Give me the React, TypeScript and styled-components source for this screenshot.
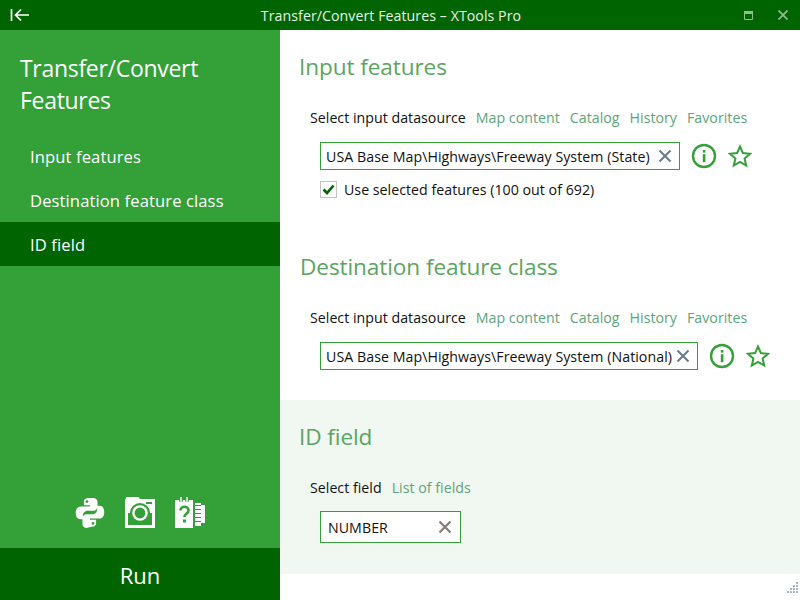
import React from 'react'
import styled, { createGlobalStyle } from 'styled-components'

const Global = createGlobalStyle`
  html, body { margin: 0; padding: 0; background: #fff; }
  body { font-family: "Open Sans", "Noto Sans", sans-serif; }
`

const DARK = '#006400'
const GREEN = '#33a137'

const Page = styled.div`
  width: 800px;
  height: 600px;
  display: flex;
  flex-direction: column;
  overflow: hidden;
  position: relative;
`
const TitleBar = styled.header`
  height: 30px;
  flex: none;
  background: ${DARK};
  display: flex;
  align-items: center;
  position: relative;
`
const BackButton = styled.div`
  width: 30px;
  padding-left: 10px;
  display: flex;
  align-items: center;
`
const TitleText = styled.div`
  position: absolute;
  left: 0;
  right: 18px;
  text-align: center;
  color: #e6f2e6;
  font-size: 14.2px;
  letter-spacing: 0.05px;
`
const WindowButtons = styled.div`
  margin-left: auto;
  display: flex;
  align-items: center;
  gap: 25px;
  padding-right: 12px;
`
const Body = styled.div`
  flex: 1;
  display: flex;
  min-height: 0;
`
const Sidebar = styled.aside`
  width: 280px;
  flex: none;
  background: ${GREEN};
  display: flex;
  flex-direction: column;
`
const SideTitle = styled.h1`
  margin: 0;
  padding: 22px 20px 0;
  font-size: 23px;
  line-height: 32px;
  font-weight: 400;
  color: #fff;
  letter-spacing: -0.3px;
`
const Nav = styled.nav`
  margin-top: 18px;
  display: flex;
  flex-direction: column;
`
const NavItem = styled.div<{ $active?: boolean }>`
  height: 44px;
  display: flex;
  align-items: center;
  padding-left: 30px;
  font-size: 16.6px;
  letter-spacing: 0.1px;
  color: #fff;
  background: ${p => (p.$active ? DARK : 'transparent')};
`
const Tools = styled.div`
  margin-top: auto;
  display: flex;
  justify-content: center;
  align-items: center;
  gap: 20px;
  padding-bottom: 20px;
`
const RunButton = styled.div`
  height: 52px;
  box-sizing: border-box;
  padding-top: 2px;
  flex: none;
  background: ${DARK};
  color: #fff;
  font-size: 22px;
  display: flex;
  align-items: center;
  justify-content: center;
`
const Main = styled.main`
  flex: 1;
  display: flex;
  flex-direction: column;
  background: #fff;
`
const Section = styled.section<{ $height: number; $tint?: boolean }>`
  height: ${p => p.$height}px;
  flex: none;
  box-sizing: border-box;
  padding: 22px 0 0 19px;
  background: ${p => (p.$tint ? '#f1f8f1' : 'transparent')};
`
const Heading = styled.h2<{ $shift?: number }>`
  margin: 0 0 0 ${p => p.$shift ?? 0}px;
  font-size: 22.6px;
  line-height: 30px;
  font-weight: 400;
  color: #5ba562;
  letter-spacing: -0.1px;
`
const SourceRow = styled.div`
  margin: 26px 0 0 11px;
  display: flex;
  gap: 10px;
  align-items: center;
  font-size: 14.2px;
  line-height: 20px;
  letter-spacing: 0.02px;
  white-space: nowrap;
`
const Label = styled.span`
  color: #111;
`
const Link = styled.span`
  color: #5ba57c;
`
const InputRow = styled.div<{ $top?: number }>`
  margin: ${p => p.$top ?? 14}px 0 0 21px;
  display: flex;
  align-items: center;
`
const InputBox = styled.div<{ $width: number; $tall?: boolean }>`
  width: ${p => p.$width}px;
  height: ${p => (p.$tall ? 32 : 28)}px;
  box-sizing: border-box;
  border: 1px solid ${GREEN};
  background: #fff;
  display: flex;
  align-items: center;
  padding: 0 ${p => (p.$tall ? 8 : 7)}px 0 ${p => (p.$tall ? 7 : 5)}px;
  font-size: 14.2px;
  letter-spacing: 0.05px;
  color: #111;
  white-space: nowrap;
`
const InputText = styled.span`
  flex: 1;
  overflow: hidden;
  margin-right: 3px;
`
const IconGroup = styled.div`
  margin-left: 11px;
  display: flex;
  align-items: center;
  gap: 11px;
`
const CheckRow = styled.label`
  margin: 10px 0 0 21px;
  display: flex;
  align-items: center;
  gap: 7px;
  font-size: 14.2px;
  letter-spacing: 0.02px;
  color: #111;
`
const CheckBox = styled.span`
  width: 17px;
  height: 17px;
  box-sizing: border-box;
  border: 1px solid #c4c4c4;
  background: #fff;
  display: flex;
  align-items: center;
  justify-content: center;
`
const Grip = styled.div`
  position: absolute;
  right: 2px;
  bottom: 2px;
`

const ClearIcon = ({ color = '#6b7f8c' }: { color?: string }) => (
  <svg width="14" height="14" viewBox="0 0 14 14">
    <path d="M1.500 1.500l11 11M12.500 1.500l-11 11" stroke={color} strokeWidth="2.200" fill="none" />
  </svg>
)

const InfoIcon = () => (
  <svg width="26" height="26" viewBox="0 0 26 26">
    <circle cx="13" cy="13" r="11" fill="none" stroke={GREEN} strokeWidth="2.400" />
    <rect x="11.800" y="7" width="2.600" height="2.600" fill={GREEN} />
    <rect x="11.800" y="11.200" width="2.600" height="8" fill={GREEN} />
  </svg>
)

const StarIcon = () => (
  <svg width="24" height="24" viewBox="0 0 24 24">
    <path
      d="M12 2.500l2.900 6.600 7.100.7-5.400 4.700 1.600 7-6.200-3.700-6.200 3.700 1.600-7L2 9.800l7.100-.7z"
      fill="none"
      stroke={GREEN}
      strokeWidth="2"
    />
  </svg>
)

const PythonIcon = () => (
  <svg width="30" height="31" viewBox="0 0 32 32" fill="#fff" preserveAspectRatio="none">
    <path d="M15.800 1c-6 0-6.300 2.400-6.300 3.800V8.500H16v1.300H6.200C3 9.800.8 12.100.8 16.300c0 4.300 2 6.600 4.800 6.600h2.800v-3.800c0-2.700 2.300-5 5.100-5h6.300c2.300 0 4.200-1.900 4.200-4.200V4.800C23.900 2.500 21.700 1 19.600 1zm-3 2.300a1.400 1.400 0 110 2.900 1.400 1.400 0 010-2.900z" />
    <path d="M16.200 31c6 0 6.300-2.400 6.300-3.800v-3.700H16v-1.300h9.800c3.200 0 5.400-2.300 5.400-6.500 0-4.300-2-6.600-4.800-6.600h-2.800v3.800c0 2.700-2.300 5-5.100 5h-6.300c-2.300 0-4.200 1.900-4.200 4.200v6.100c0 2.300 2.200 3.800 4.300 3.800zm3-2.300a1.400 1.400 0 110-2.900 1.400 1.400 0 010 2.900z" />
  </svg>
)

const CameraIcon = () => (
  <svg width="30" height="31" viewBox="0 0 30 31">
    <path fill="#fff" d="M0 3L1.500 0H13.500L15 2H30V31H0z" />
    <rect x="3" y="16" width="24" height="12" fill={GREEN} />
    <rect x="21" y="5" width="6" height="2" fill={GREEN} />
    <circle cx="15" cy="16" r="10" fill={GREEN} />
    <circle cx="15" cy="16" r="7.800" fill="#fff" />
    <circle cx="15" cy="16" r="5.400" fill={GREEN} />
  </svg>
)

const HelpBookIcon = () => (
  <svg width="30" height="31" viewBox="0 0 30 31">
    <rect x="0" y="3" width="18" height="28" fill="#fff" />
    <path d="M6 0v5M12 0v5" stroke={GREEN} strokeWidth="3.400" />
    <path d="M6 0v5M12 0v5" stroke="#fff" strokeWidth="1.400" />
    <path
      fill="#fff"
      d="M20 6h6v2h4v18h-4v3h-6v-4h6v-1h-6v-3h6v-1h-6v-3h6v-1h-6v-3h6v-1h-6v-3h6v-1h-6z"
    />
    <path
      d="M5.500 13.500c0-5 8-5 8 0 0 3-4 3-4 6.500"
      fill="none"
      stroke={GREEN}
      strokeWidth="2.600"
    />
    <rect x="8" y="22.500" width="3" height="3" fill={GREEN} />
  </svg>
)

const CollapseIcon = () => (
  <svg width="20" height="14" viewBox="0 0 20 14">
    <path d="M1.500 1v12M19 7H5.500M11 1.500L5.500 7l5.500 5.500" stroke="#fff" strokeWidth="1.700" fill="none" />
  </svg>
)

const MaximizeIcon = () => (
  <svg width="9" height="9" viewBox="0 0 9 9">
    <path d="M.5.500h8v8h-8z" fill="none" stroke="#8fbd8f" />
    <rect x="0" y="0" width="9" height="3" fill="#8fbd8f" />
  </svg>
)

const CloseIcon = () => (
  <svg width="10" height="10" viewBox="0 0 10 10">
    <path d="M.5.500l9 9M9.500.500l-9 9" stroke="#8fbd8f" strokeWidth="1.700" fill="none" />
  </svg>
)

const GripIcon = () => (
  <svg width="11" height="11" viewBox="0 0 11 11" fill="#a9b4c9">
    <rect x="9" y="0" width="2" height="2" />
    <rect x="6" y="3" width="2" height="2" />
    <rect x="9" y="3" width="2" height="2" />
    <rect x="3" y="6" width="2" height="2" />
    <rect x="6" y="6" width="2" height="2" />
    <rect x="9" y="6" width="2" height="2" />
    <rect x="0" y="9" width="2" height="2" />
    <rect x="3" y="9" width="2" height="2" />
    <rect x="6" y="9" width="2" height="2" />
    <rect x="9" y="9" width="2" height="2" />
  </svg>
)

const SourceLinks = () => (
  <SourceRow>
    <Label>Select input datasource</Label>
    <Link>Map content</Link>
    <Link>Catalog</Link>
    <Link>History</Link>
    <Link>Favorites</Link>
  </SourceRow>
)

export default function App() {
  return (
    <Page>
      <Global />
      <TitleBar>
        <BackButton>
          <CollapseIcon />
        </BackButton>
        <TitleText>Transfer/Convert Features – XTools Pro</TitleText>
        <WindowButtons>
          <MaximizeIcon />
          <CloseIcon />
        </WindowButtons>
      </TitleBar>
      <Body>
        <Sidebar>
          <SideTitle>
            Transfer/Convert
            <br />
            Features
          </SideTitle>
          <Nav>
            <NavItem>Input features</NavItem>
            <NavItem>Destination feature class</NavItem>
            <NavItem $active>ID field</NavItem>
          </Nav>
          <Tools>
            <PythonIcon />
            <CameraIcon />
            <HelpBookIcon />
          </Tools>
          <RunButton>Run</RunButton>
        </Sidebar>
        <Main>
          <Section $height={200}>
            <Heading>Input features</Heading>
            <SourceLinks />
            <InputRow>
              <InputBox $width={360}>
                <InputText>USA Base Map\Highways\Freeway System (State)</InputText>
                <ClearIcon />
              </InputBox>
              <IconGroup>
                <InfoIcon />
                <StarIcon />
              </IconGroup>
            </InputRow>
            <CheckRow>
              <CheckBox>
                <svg width="13" height="11" viewBox="0 0 13 11">
                  <path d="M1.500 5.500l3.500 3.500 6.500-7.500" stroke={DARK} strokeWidth="2.600" fill="none" />
                </svg>
              </CheckBox>
              Use selected features (100 out of 692)
            </CheckRow>
          </Section>
          <Section $height={170}>
            <Heading $shift={1}>Destination feature class</Heading>
            <SourceLinks />
            <InputRow>
              <InputBox $width={378}>
                <InputText>USA Base Map\Highways\Freeway System (National)</InputText>
                <ClearIcon />
              </InputBox>
              <IconGroup>
                <InfoIcon />
                <StarIcon />
              </IconGroup>
            </InputRow>
          </Section>
          <Section $height={174} $tint>
            <Heading>ID field</Heading>
            <SourceRow>
              <Label>Select field</Label>
              <Link>List of fields</Link>
            </SourceRow>
            <InputRow $top={13}>
              <InputBox $width={141} $tall>
                <InputText>NUMBER</InputText>
                <ClearIcon color="#857d74" />
              </InputBox>
            </InputRow>
          </Section>
        </Main>
      </Body>
      <Grip>
        <GripIcon />
      </Grip>
    </Page>
  )
}
